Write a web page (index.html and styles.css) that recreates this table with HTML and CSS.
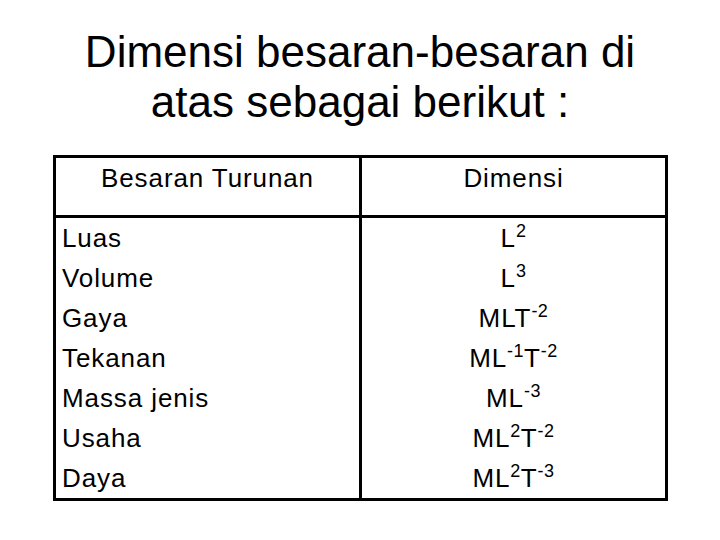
FILE: index.html
```html
<!DOCTYPE html>
<html lang="id">
<head>
<meta charset="utf-8">
<title>Dimensi besaran</title>
<link rel="stylesheet" href="styles.css">
</head>
<body>
<h1 class="title">Dimensi besaran-besaran di<br>atas sebagai berikut :</h1>
<div class="table">
  <div class="cell head left">Besaran Turunan</div>
  <div class="cell head right">Dimensi</div>
  <div class="cell body left">
    <div>Luas</div>
    <div>Volume</div>
    <div>Gaya</div>
    <div>Tekanan</div>
    <div>Massa jenis</div>
    <div>Usaha</div>
    <div>Daya</div>
  </div>
  <div class="cell body right">
    <div>L<sup>2</sup></div>
    <div>L<sup>3</sup></div>
    <div>MLT<sup>-2</sup></div>
    <div>ML<sup>-1</sup>T<sup>-2</sup></div>
    <div>ML<sup>-3</sup></div>
    <div>ML<sup>2</sup>T<sup>-2</sup></div>
    <div>ML<sup>2</sup>T<sup>-3</sup></div>
  </div>
</div>
</body>
</html>
```
FILE: styles.css
```css
html, body {
  margin: 0;
  padding: 0;
  background: #ffffff;
}
body {
  width: 720px;
  height: 540px;
  overflow: hidden;
  font-family: "Liberation Sans", Arial, sans-serif;
  color: #000000;
}
.title {
  margin: 27px 0 0 0;
  font-size: 44px;
  font-weight: normal;
  line-height: 50px;
  text-align: center;
}
.table {
  display: grid;
  grid-template-columns: 306px 303px;
  width: 615px;
  box-sizing: border-box;
  margin: 28px 0 0 53px;
  border: 3px solid #000;
  font-size: 26px;
  line-height: 40px;
  letter-spacing: 0.9px;
}
.cell.left {
  border-right: 3px solid #000;
}
.head {
  text-align: center;
  padding: 0 0 17px 0;
  border-bottom: 3px solid #000;
}
.body.left {
  padding: 0 0 0 6px;
}
.body.right {
  text-align: center;
}
sup {
  font-size: 18px;
  line-height: 1;
  vertical-align: 10px;
  letter-spacing: 0.5px;
}
```
